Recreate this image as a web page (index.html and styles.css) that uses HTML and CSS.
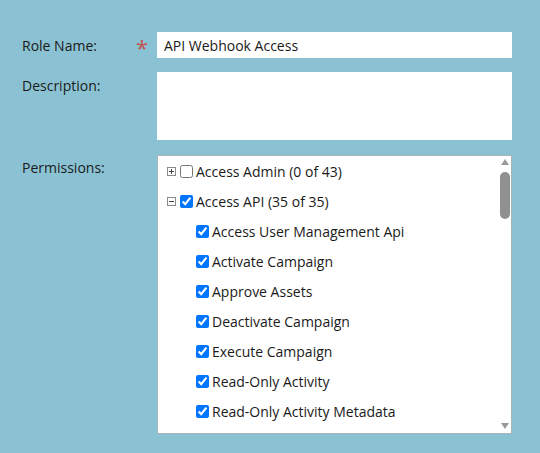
FILE: index.html
```html
<!DOCTYPE html>
<html>
<head>
<meta charset="utf-8">
<link rel="stylesheet" href="styles.css">
</head>
<body>
<div class="form">
  <div class="label label-req"><span>Role Name:</span><span class="req">*</span></div>
  <div class="field"><input class="text-input" type="text" value="API Webhook Access"></div>

  <div class="label"><span>Description:</span></div>
  <div class="field"><textarea class="text-area"></textarea></div>

  <div class="label label-perm"><span>Permissions:</span></div>
  <div class="field">
    <div class="tree-box">
      <div class="tree">
        <div class="row parent">
          <svg class="exp" width="9" height="9" viewBox="0 0 9 9"><rect x="0.5" y="0.5" width="8" height="8" fill="#fff" stroke="#8a8a8a"/><path d="M2 4.5h5M4.5 2v5" stroke="#444" stroke-width="1"/></svg>
          <input type="checkbox" class="cb">
          <span>Access Admin (0 of 43)</span>
        </div>
        <div class="row parent">
          <svg class="exp" width="9" height="9" viewBox="0 0 9 9"><rect x="0.5" y="0.5" width="8" height="8" fill="#fff" stroke="#8a8a8a"/><path d="M2 4.5h5" stroke="#444" stroke-width="1"/></svg>
          <input type="checkbox" class="cb" checked>
          <span>Access API (35 of 35)</span>
        </div>
        <div class="row child"><input type="checkbox" class="cb" checked><span>Access User Management Api</span></div>
        <div class="row child"><input type="checkbox" class="cb" checked><span>Activate Campaign</span></div>
        <div class="row child"><input type="checkbox" class="cb" checked><span>Approve Assets</span></div>
        <div class="row child"><input type="checkbox" class="cb" checked><span>Deactivate Campaign</span></div>
        <div class="row child"><input type="checkbox" class="cb" checked><span>Execute Campaign</span></div>
        <div class="row child"><input type="checkbox" class="cb" checked><span>Read-Only Activity</span></div>
        <div class="row child"><input type="checkbox" class="cb" checked><span>Read-Only Activity Metadata</span></div>
      </div>
      <div class="scrollbar">
        <div class="arrow-up"></div>
        <div class="thumb"></div>
        <div class="track"></div>
        <div class="arrow-down"></div>
      </div>
    </div>
  </div>
</div>
</body>
</html>
```
FILE: styles.css
```css
html, body {
  margin: 0;
  padding: 0;
  background: #8ac2d3;
}
body {
  font-family: "Open Sans", "Liberation Sans", sans-serif;
  font-size: 14px;
  color: #1a1a1a;
  height: 453px;
  overflow: hidden;
}
.form {
  display: grid;
  grid-template-columns: 135px 355px;
  row-gap: 14px;
  padding: 32px 0 0 22px;
}
.label {
  display: flex;
  justify-content: space-between;
  align-items: flex-start;
  padding-top: 4px;
  line-height: 19px;
}
.req {
  color: #c3514f;
  font-size: 22px;
  line-height: 19px;
  height: 19px;
  margin-right: 9px;
  padding-top: 2px;
  box-sizing: border-box;
}
.text-input {
  display: block;
  box-sizing: border-box;
  width: 355px;
  height: 26px;
  border: 0;
  margin: 0;
  padding: 0 7px;
  font: inherit;
  color: inherit;
  background: #fff;
  outline: none;
}
.text-area {
  display: block;
  box-sizing: border-box;
  width: 355px;
  height: 68px;
  border: 0;
  margin: 0;
  padding: 4px 7px;
  font: inherit;
  resize: none;
  background: #fff;
  outline: none;
}
.label-perm {
  padding-top: 4px;
}
.tree-box {
  box-sizing: border-box;
  width: 355px;
  height: 279px;
  margin-top: 1px;
  background: #fff;
  border: 1px solid #a9b4b9;
  display: flex;
}
.tree {
  flex: 1;
  overflow: hidden;
}
.row {
  height: 30px;
  display: flex;
  align-items: center;
  white-space: nowrap;
}
.parent {
  padding-left: 9px;
}
.child {
  padding-left: 34px;
}
.exp {
  display: block;
  flex: none;
}
.cb {
  width: 13px;
  height: 13px;
  margin: 0 3px 0 4px;
  flex: none;
}
.scrollbar {
  width: 13px;
  flex: none;
  display: flex;
  flex-direction: column;
  align-items: center;
  padding: 3px 0 4px 0;
  box-sizing: border-box;
}
.arrow-up {
  width: 0;
  height: 0;
  border-left: 4px solid transparent;
  border-right: 4px solid transparent;
  border-bottom: 6px solid #9a9a9a;
}
.thumb {
  width: 10px;
  height: 47px;
  margin-top: 7px;
  border-radius: 5px;
  background: #909090;
}
.track {
  flex: 1;
}
.arrow-down {
  width: 0;
  height: 0;
  border-left: 4px solid transparent;
  border-right: 4px solid transparent;
  border-top: 6px solid #9a9a9a;
}
```
